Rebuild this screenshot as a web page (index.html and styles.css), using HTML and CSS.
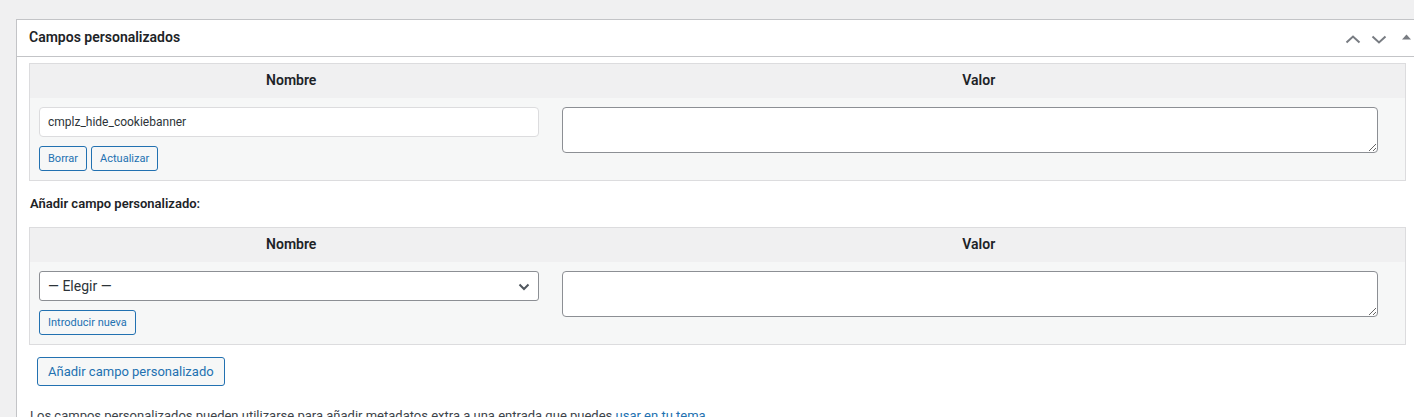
FILE: index.html
```html
<!DOCTYPE html>
<html lang="es">
<head>
<meta charset="utf-8">
<title>Campos personalizados</title>
<link rel="stylesheet" href="styles.css">
</head>
<body>
<div class="postbox">
  <div class="postbox-header">
    <h2 class="hndle">Campos personalizados</h2>
    <div class="handle-actions">
      <button class="handle-btn" aria-label="Subir">
        <svg width="16" height="9" viewBox="0 0 16 9"><path d="M1.5 7.5 L8 1.5 L14.5 7.5" fill="none" stroke="#787c82" stroke-width="2"/></svg>
      </button>
      <button class="handle-btn" aria-label="Bajar">
        <svg width="16" height="9" viewBox="0 0 16 9"><path d="M1.5 1.5 L8 7.5 L14.5 1.5" fill="none" stroke="#787c82" stroke-width="2"/></svg>
      </button>
      <button class="handle-btn tri" aria-label="Alternar">
        <svg width="9" height="6" viewBox="0 0 9 6"><path d="M0 5.5 L4.5 0.5 L9 5.5 Z" fill="#787c82"/></svg>
      </button>
    </div>
  </div>
  <div class="inside">
    <table class="list-table">
      <thead>
        <tr><th class="left">Nombre</th><th>Valor</th></tr>
      </thead>
      <tbody>
        <tr>
          <td class="left">
            <input class="meta-key" type="text" value="cmplz_hide_cookiebanner">
            <div class="submit">
              <button class="button button-small">Borrar</button>
              <button class="button button-small">Actualizar</button>
            </div>
          </td>
          <td><textarea class="meta-value" rows="2"></textarea></td>
        </tr>
      </tbody>
    </table>

    <p class="add-title"><strong>Añadir campo personalizado:</strong></p>

    <table class="list-table">
      <thead>
        <tr><th class="left">Nombre</th><th>Valor</th></tr>
      </thead>
      <tbody>
        <tr>
          <td class="left">
            <div class="select-wrap">
              <select class="meta-select"><option>— Elegir —</option></select>
              <svg class="select-arrow" width="12" height="8" viewBox="0 0 12 8"><path d="M1.5 1.5 L6 6 L10.5 1.5" fill="none" stroke="#50575e" stroke-width="2"/></svg>
            </div>
            <div class="submit">
              <button class="button button-small">Introducir nueva</button>
            </div>
          </td>
          <td><textarea class="meta-value" rows="2"></textarea></td>
        </tr>
      </tbody>
    </table>

    <div class="add-row">
      <button class="button">Añadir campo personalizado</button>
    </div>

    <p class="help">Los campos personalizados pueden utilizarse para añadir metadatos extra a una entrada que puedes <a href="#">usar en tu tema</a>.</p>
  </div>
</div>
</body>
</html>
```

FILE: styles.css
```css
html, body {
  margin: 0;
  padding: 0;
  background: #f0f0f1;
  overflow: hidden;
}
body {
  font-family: Roboto, "Noto Sans", sans-serif;
  font-size: 13px;
  color: #3c434a;
  line-height: 1.4;
}
.postbox {
  margin: 19px 0 0 16px;
  width: 1410px;
  background: #fff;
  border: 1px solid #c3c4c7;
  box-sizing: border-box;
}
.postbox-header {
  display: flex;
  align-items: center;
  justify-content: space-between;
  height: 36px;
  border-bottom: 1px solid #c3c4c7;
}
.hndle {
  margin: 0;
  padding: 0 12px;
  font-size: 14px;
  font-weight: 600;
  color: #1d2327;
  line-height: 1.4;
}
.handle-actions {
  display: flex;
  align-items: center;
  margin-right: 9px;
}
.handle-btn {
  width: 26px;
  height: 36px;
  padding: 0;
  border: 0;
  background: none;
  display: flex;
  align-items: center;
  justify-content: center;
}
.handle-btn svg {
  margin-top: 2px;
}
.handle-btn.tri {
  width: 24px;
  justify-content: flex-start;
  padding-left: 10px;
}
.handle-btn.tri svg {
  margin-top: -2px;
}
.inside {
  padding: 6px 0 12px 12px;
}
.list-table {
  width: 1377px;
  border: 1px solid #dcdcde;
  border-spacing: 0;
  background: #f6f7f7;
}
.list-table th {
  background: #f0f0f1;
  font-size: 14px;
  font-weight: 600;
  color: #1d2327;
  height: 34px;
  padding: 0 8px 1px;
  box-sizing: border-box;
  text-align: center;
}
.list-table th.left,
.list-table td.left {
  width: 38%;
}
.list-table td {
  vertical-align: top;
  padding: 9px 8px 9px 9px;
}
.meta-key {
  display: block;
  box-sizing: border-box;
  width: 500px;
  height: 30px;
  margin: 0;
  padding: 0 8px;
  font-family: Roboto, "Noto Sans", sans-serif;
  font-size: 12px;
  color: #2c3338;
  border: 1px solid #dcdcde;
  border-radius: 4px;
  background: #fff;
}
.submit {
  display: flex;
  gap: 4px;
  margin-top: 9px;
}
.button {
  font-family: Roboto, "Noto Sans", sans-serif;
  display: inline-flex;
  align-items: center;
  justify-content: center;
  box-sizing: border-box;
  height: 29px;
  padding: 0 10px;
  font-size: 13px;
  color: #2271b1;
  background: #f6f7f7;
  border: 1px solid #2271b1;
  border-radius: 3px;
  margin: 0;
}
.button-small {
  height: 24px;
  padding: 0 8px;
  font-size: 11px;
}
.meta-value {
  display: block;
  box-sizing: border-box;
  width: 816px;
  height: 46px;
  margin: 0;
  border: 1px solid #8c8f94;
  border-radius: 4px;
  background: #fff;
  resize: both;
}
.add-title {
  margin: 14px 0 14px 1px;
  font-size: 13px;
  color: #1d2327;
}
.add-title strong {
  font-weight: 600;
}
.select-wrap {
  position: relative;
  width: 500px;
}
.meta-select {
  display: block;
  appearance: none;
  -webkit-appearance: none;
  box-sizing: border-box;
  width: 500px;
  height: 30px;
  margin: 0;
  padding: 0 24px 0 8px;
  font-family: Roboto, "Noto Sans", sans-serif;
  font-size: 14px;
  color: #2c3338;
  border: 1px solid #8c8f94;
  border-radius: 3px;
  background: #fff;
}
.select-arrow {
  position: absolute;
  right: 9px;
  top: 12px;
  pointer-events: none;
}
.submit .button-small {
  height: 25px;
}
.add-row {
  margin: 12px 0 0 8px;
}
.help {
  margin: 21px 0 0 1px;
  font-size: 13px;
  color: #3c434a;
}
.help a {
  color: #2271b1;
  text-decoration: underline;
}
```
